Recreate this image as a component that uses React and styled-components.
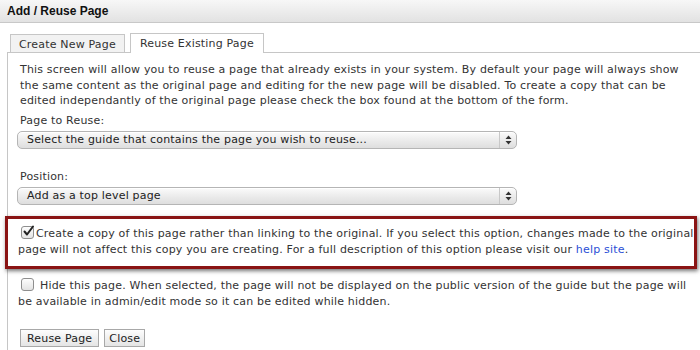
import React from 'react';
import styled, { createGlobalStyle } from 'styled-components';

const GlobalStyle = createGlobalStyle`
  body {
    margin: 0;
    background: #fff;
    font-family: "DejaVu Sans", Verdana, sans-serif;
    font-size: 11px;
    letter-spacing: 0.18px;
    color: #333;
  }
`;

const Dialog = styled.div`
  width: 700px;
  height: 350px;
  overflow: hidden;
  background: #fff;
`;

const TitleBar = styled.div`
  height: 23px;
  box-sizing: border-box;
  padding: 4px 7px 0;
  background: linear-gradient(#f7f7f7, #e2e2e2);
  border-bottom: 1px solid #c8c8c8;
  font-family: "Liberation Sans", Arial, sans-serif;
  font-weight: bold;
  font-size: 12px;
  letter-spacing: 0;
  color: #111;
`;

const TabRow = styled.div`
  display: flex;
  align-items: flex-end;
  gap: 5px;
  padding: 10px 0 0 10px;
  height: 19px;
`;

const Tab = styled.div`
  box-sizing: border-box;
  height: ${p => (p.$active ? '20px' : '18px')};
  padding: ${p => (p.$active ? '3px 9px 0' : '3px 8px 0')};
  border: 1px solid #c6c6c6;
  border-bottom: none;
  background: ${p => (p.$active ? '#fff' : '#f2f2f2')};
  margin-bottom: ${p => (p.$active ? '-1px' : '0')};
  position: relative;
  color: #333;
  white-space: nowrap;
`;

const Panel = styled.div`
  margin-left: 7px;
  border-top: 1px solid #c6c6c6;
  border-left: 1px solid #c6c6c6;
  padding: 9px 0 20px 12px;
`;

const Intro = styled.p`
  margin: 0;
  line-height: 15.5px;
  white-space: nowrap;
`;

const Label = styled.div`
  margin-top: ${p => p.$top || 0}px;
  line-height: 15px;
`;

const Select = styled.div`
  margin: 3px 0 0 -3px;
  width: 500px;
  height: 18px;
  box-sizing: border-box;
  display: flex;
  align-items: center;
  border: 1px solid #b5b5b5;
  border-radius: 5px;
  background: linear-gradient(#fbfbfb, #e9e9e9 60%, #dedede);
  box-shadow: inset 0 1px 0 #fff;
`;

const SelectText = styled.span`
  flex: 1;
  padding-left: 9px;
  white-space: nowrap;
  color: #222;
`;

const Arrows = styled.span`
  width: 16px;
  height: 100%;
  border-left: 1px solid #c8c8c8;
  display: flex;
  align-items: center;
  justify-content: center;
`;

const Highlight = styled.div`
  margin: 11px 0 0 -15px;
  width: 692px;
  box-sizing: border-box;
  border: 3px solid #8a1414;
  box-shadow: 1px 2px 4px rgba(0, 0, 0, 0.55);
  padding: 7px 0 8px 10px;
  background: #fff;
  line-height: 16px;
  white-space: nowrap;
`;

const Option = styled.div`
  margin: ${p => p.$top || 0}px 0 0 -2px;
  line-height: 16px;
  white-space: nowrap;
`;

const Box = styled.span`
  display: inline-block;
  vertical-align: -2px;
  width: 13px;
  height: 13px;
  box-sizing: border-box;
  border: 1px solid #8e8e8e;
  border-radius: 3px;
  background: linear-gradient(#fdfdfd, #e3e3e3);
  margin: 0 ${p => (p.$checked ? 2 : 6)}px 0 3px;
  position: relative;
`;

const Link = styled.a`
  color: #2b4fd6;
  text-decoration: none;
`;

const Buttons = styled.div`
  display: flex;
  gap: 5px;
  margin-top: 19px;
`;

const Button = styled.div`
  height: 18px;
  box-sizing: border-box;
  padding: 1px ${p => p.$pad || 6}px 0;
  border: 1px solid #a8a8a8;
  background: linear-gradient(#fdfdfd, #e4e4e4);
  line-height: 15px;
  color: #222;
`;

function Check() {
  return (
    <svg width="13" height="13" viewBox="0 0 13 13" style={{ position: 'absolute', left: 0, top: -2 }}>
      <path d="M2.5 6.5 L5 9.5 L11 1.5" fill="none" stroke="#222" strokeWidth="2" strokeLinecap="round" strokeLinejoin="round" />
    </svg>
  );
}

function UpDown() {
  return (
    <Arrows>
      <svg width="7" height="10" viewBox="0 0 7 10">
        <path d="M3.5 0.5 L6.5 4 L0.5 4 Z M0.5 6 L6.5 6 L3.5 9.5 Z" fill="#333" />
      </svg>
    </Arrows>
  );
}

export default function App() {
  return (
    <Dialog>
      <GlobalStyle />
      <TitleBar>Add / Reuse Page</TitleBar>
      <TabRow>
        <Tab>Create New Page</Tab>
        <Tab $active>Reuse Existing Page</Tab>
      </TabRow>
      <Panel>
        <Intro>
          This screen will allow you to reuse a page that already exists in your system. By default your page will always show<br />
          the same content as the original page and editing for the new page will be disabled. To create a copy that can be<br />
          edited independantly of the original page please check the box found at the bottom of the form.
        </Intro>
        <Label $top={4}>Page to Reuse:</Label>
        <Select>
          <SelectText>Select the guide that contains the page you wish to reuse...</SelectText>
          <UpDown />
        </Select>
        <Label $top={20}>Position:</Label>
        <Select>
          <SelectText>Add as a top level page</SelectText>
          <UpDown />
        </Select>
        <Highlight>
          <Box $checked><Check /></Box>Create a copy of this page rather than linking to the original. If you select this option, changes made to the original<br />
          page will not affect this copy you are creating. For a full description of this option please visit our <Link href="#">help site</Link>.
        </Highlight>
        <Option $top={9}>
          <Box />Hide this page. When selected, the page will not be displayed on the public version of the guide but the page will<br />
          be available in admin/edit mode so it can be edited while hidden.
        </Option>
        <Buttons>
          <Button>Reuse Page</Button>
          <Button $pad={4}>Close</Button>
        </Buttons>
      </Panel>
    </Dialog>
  );
}
